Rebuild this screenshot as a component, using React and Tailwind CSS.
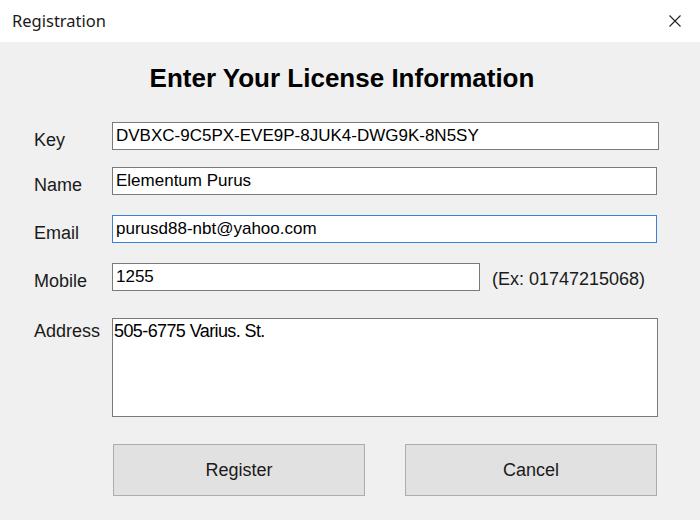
export default function App() {
  const field =
    "h-[28px] bg-white border border-[#7a7a7a] px-[3px] text-[17px] text-black outline-none";
  const label = "w-[78px] pt-[4px] leading-[28px] text-[18px] text-[#1a1a1a]";
  return (
    <div className="w-[700px] h-[520px] bg-[#f0f0f0] flex flex-col" style={{ fontFamily: '"Liberation Sans", Arial, sans-serif' }}>
      {/* title bar */}
      <div className="h-[42px] bg-white flex items-center justify-between pl-[12px] pr-[18px] shrink-0">
        <span className="text-[16.5px] text-[#1a1a1a]" style={{ fontFamily: '"Noto Sans", "Open Sans", sans-serif' }}>
          Registration
        </span>
        <svg width="14" height="14" viewBox="0 0 14 14" className="text-[#222]">
          <path d="M1.5 1.5 L12.5 12.5 M12.5 1.5 L1.5 12.5" stroke="currentColor" strokeWidth="1.1" fill="none" />
        </svg>
      </div>

      {/* heading */}
      <h1 className="mt-[20px] pr-[16px] text-center text-[26px] font-bold text-black leading-[32px]">
        Enter Your License Information
      </h1>

      {/* form */}
      <div className="mt-[28px] pl-[34px] pr-[41px] flex flex-col">
        <div className="flex h-[28px]">
          <label className={label}>Key</label>
          <input className={`${field} flex-1`} defaultValue="DVBXC-9C5PX-EVE9P-8JUK4-DWG9K-8N5SY" />
        </div>
        <div className="flex h-[28px] mt-[17px]">
          <label className={label}>Name</label>
          <input className={`${field} flex-1 mr-[2px]`} defaultValue="Elementum Purus" />
        </div>
        <div className="flex h-[28px] mt-[20px]">
          <label className={label}>Email</label>
          <input className={`${field} flex-1 mr-[2px] !border-[#3c7fd6]`} defaultValue="purusd88-nbt@yahoo.com" />
        </div>
        <div className="flex h-[28px] mt-[20px]">
          <label className={label}>Mobile</label>
          <input className={`${field} w-[368px]`} defaultValue="1255" />
          <span className="ml-[12px] pt-[2px] leading-[28px] text-[18px] text-[#1a1a1a]">(Ex: 01747215068)</span>
        </div>
        <div className="flex h-[99px] mt-[27px]">
          <label className="w-[78px] pt-[1px] leading-[24px] text-[18px] text-[#1a1a1a]">Address</label>
          <textarea
            className="flex-1 mr-[1px] h-[99px] bg-white border border-[#7a7a7a] px-[1px] pt-0 leading-[24px] text-[18px] tracking-[-0.6px] text-black outline-none resize-none"
            defaultValue="505-6775 Varius. St."
          />
        </div>
        <div className="flex mt-[27px] pl-[79px] pr-[2px] gap-[40px]">
          <button className="flex-1 h-[52px] bg-[#e1e1e1] border border-[#adadad] text-[18px] text-[#1a1a1a]">
            Register
          </button>
          <button className="flex-1 h-[52px] bg-[#e1e1e1] border border-[#adadad] text-[18px] text-[#1a1a1a]">
            Cancel
          </button>
        </div>
      </div>
    </div>
  );
}
